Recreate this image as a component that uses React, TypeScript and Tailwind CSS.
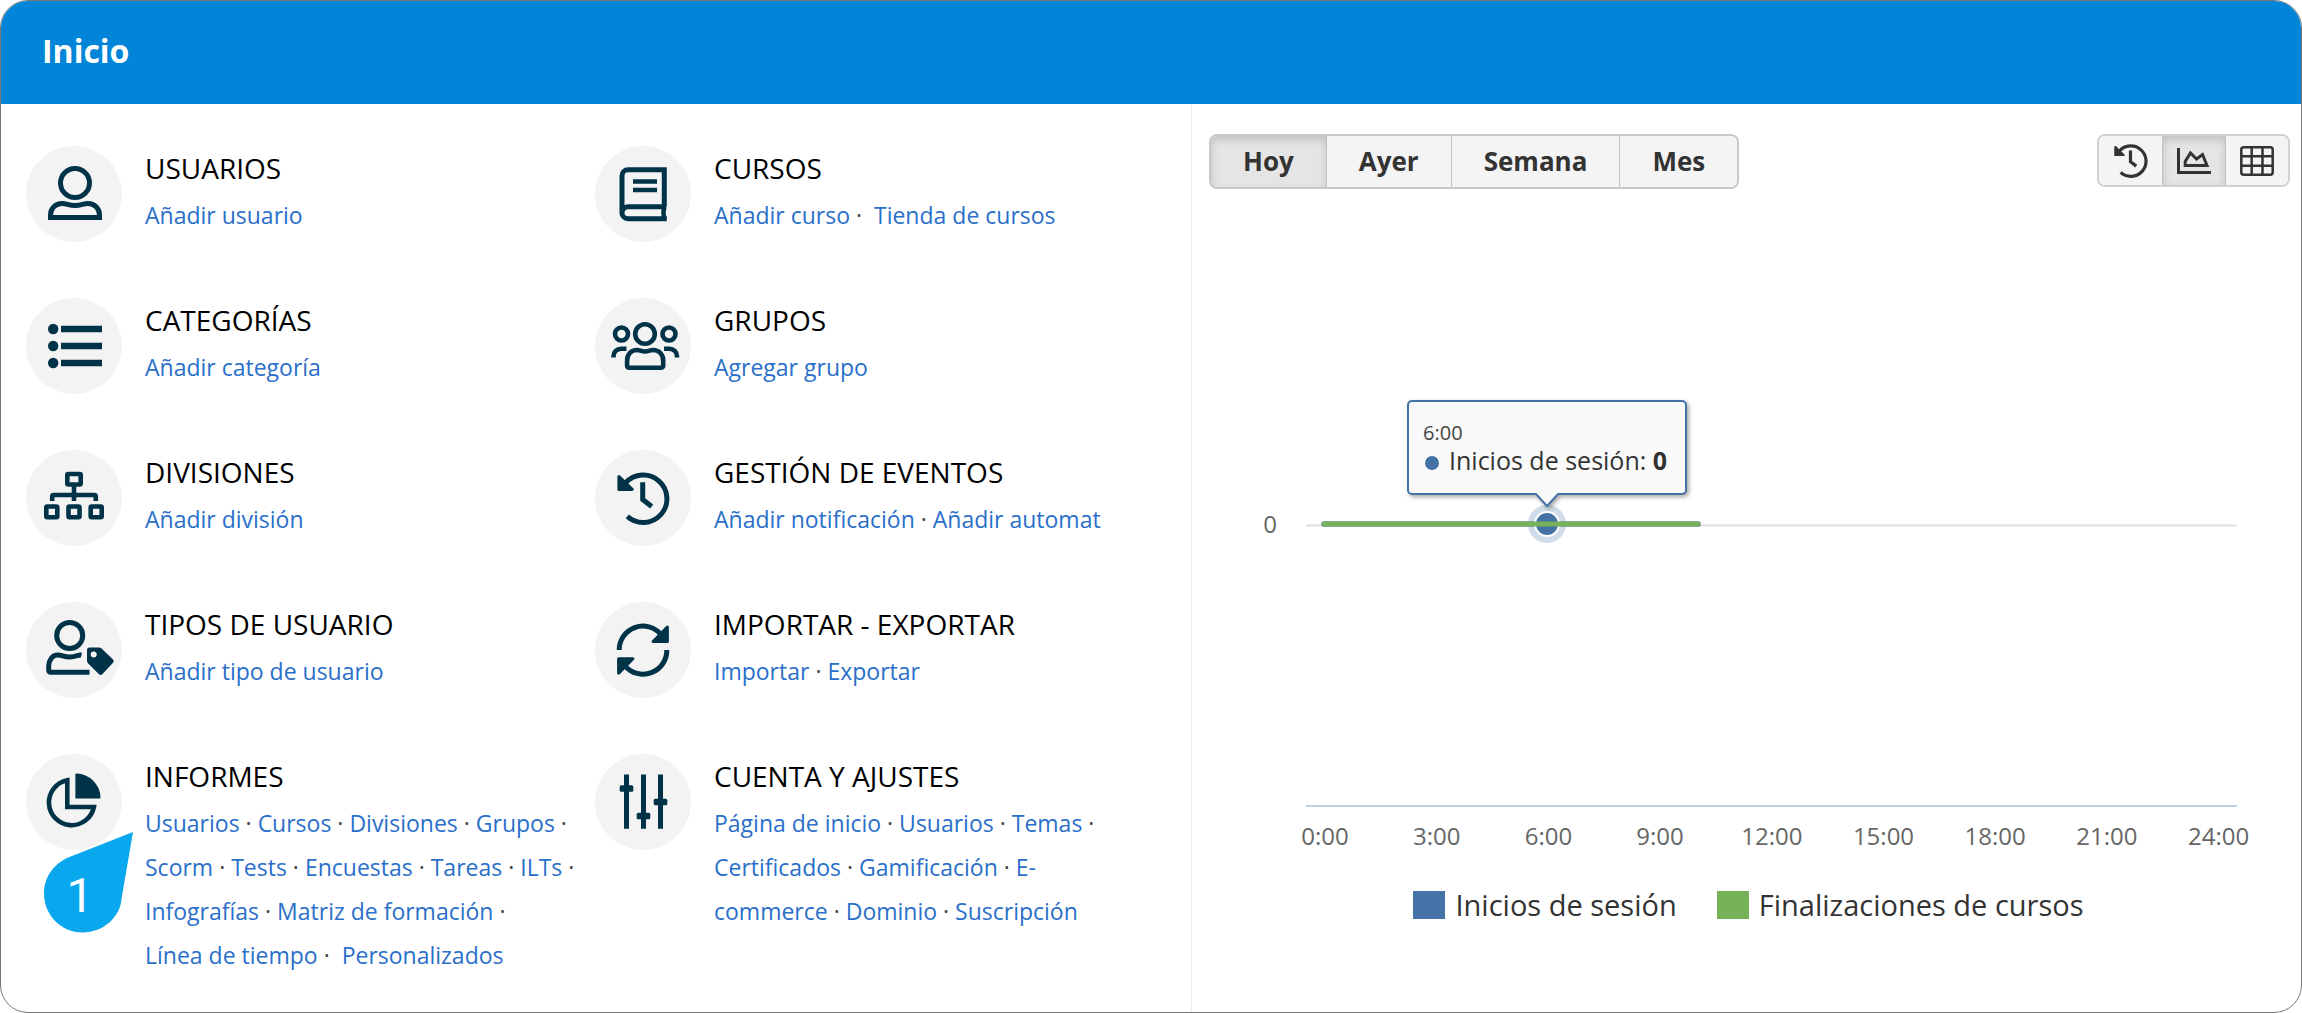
import { useState } from 'react';
import type { ReactNode } from 'react';
import { clsx } from 'clsx';

interface MenuLink {
  label: string;
  wideGap?: boolean;
}

interface MenuItem {
  title: string;
  icon: ReactNode;
  links: MenuLink[];
}

const toLinks = (...labels: string[]): MenuLink[] => labels.map((label) => ({ label }));

/* Icons, drawn on the 96px disc */
const UserIcon = (
  <>
    <circle cx="49" cy="37" r="14.5" />
    <path d="M24.5 71.5V69c0-6.500 5-11.500 11.500-11.500 5 0 6.500 2 13 2s8-2 13-2c6.500 0 11.500 5 11.500 11.500v2.500z" />
  </>
);

const ListIcon = (
  <>
    <path d="M35 31h41M35 48h41M35 65h41" strokeWidth="6.5" />
    <g fill="currentColor" stroke="none">
      <circle cx="27.200" cy="31" r="5.200" />
      <circle cx="27.200" cy="48" r="5.200" />
      <circle cx="27.200" cy="65" r="5.200" />
    </g>
  </>
);

const SitemapIcon = (
  <g strokeWidth="4.6">
    <rect x="41.300" y="24" width="13.400" height="10.500" rx="1" />
    <rect x="20.300" y="56.500" width="11" height="10.700" rx="1" />
    <rect x="42.500" y="56.500" width="11" height="10.700" rx="1" />
    <rect x="64.700" y="56.500" width="11" height="10.700" rx="1" />
    <path d="M48 36v15M26.200 51v-4.500a1.500 1.500 0 0 1 1.500-1.500h40.600a1.500 1.500 0 0 1 1.500 1.500V51" />
  </g>
);

const UserTagIcon = (
  <>
    <circle cx="43.700" cy="33.500" r="13" />
    <path d="M55.500 53.200c-3-.8-5 1.800-11.800 1.800s-7-2-12-2c-5.500 0-9 5.500-9 11v4.500a1.800 1.800 0 0 0 1.800 1.800h39" />
    <path
      d="M63.500 45.500H73a4 4 0 0 1 2.800 1.200l11 10.600a2.600 2.600 0 0 1 0 3.700L76.500 72a2.600 2.600 0 0 1-3.700 0L62.200 61.500a4 4 0 0 1-1.200-2.800V48a2.500 2.500 0 0 1 2.500-2.500zM67.700 49.500a3 3 0 1 0 0 6 3 3 0 0 0 0-6z"
      fill="currentColor"
      stroke="none"
      fillRule="evenodd"
    />
  </>
);

const PieIcon = (
  <>
    <path d="M41.300 26.200V53H67.900A22.700 22.700 0 1 1 41.300 26.200z" strokeWidth="4.6" />
    <path d="M49.400 20.500a1 1 0 0 1 1-1A24.500 24.500 0 0 1 74.500 43.500a1 1 0 0 1-1 1H49.400z" fill="currentColor" stroke="none" />
  </>
);

const BookIcon = (
  <>
    <path d="M69.300 60.800V23.800H33a6 6 0 0 0-6 6V67a6 6 0 0 0 6 5.700H71.800M27 67a6 6 0 0 1 6-6.200H71" />
    <path d="M69.500 61q-2 6 0 11M38 35.500h24M38 44h24" strokeWidth="4.5" />
  </>
);

const UsersIcon = (
  <g strokeWidth="4.6">
    <circle cx="50" cy="36" r="9.800" />
    <circle cx="26.500" cy="36" r="6.500" />
    <circle cx="74" cy="36" r="6.500" />
    <path d="M42 52c3 0 4 1.500 8 1.500s5-1.500 8-1.500c6 0 10.200 4.500 10.200 10.500v5.200a2 2 0 0 1-2 2H34.100a2 2 0 0 1-2-2v-5.200C32.100 56.500 36 52 42 52z" />
    <path d="M18.500 59.500v-1.200a7.500 7.500 0 0 1 7.500-7.500h5.500M82 59.500v-1.200a7.500 7.500 0 0 0-7.500-7.500h-5.500" />
  </g>
);

const HistoryIcon = (
  <>
    <path d="M30.500 33a23.700 23.700 0 1 1 1.800 33.300M47.700 32.300V49.500l9 7" />
    <path d="M22.400 27c0-2 1.600-2.600 2.900-1.300l13 12.600c1 1 .3 2.600-1.200 2.600H23.900a1.500 1.500 0 0 1-1.500-1.500z" fill="currentColor" stroke="none" />
  </>
);

const SyncIcon = (
  <>
    <path d="M24.200 48A23.700 23.700 0 0 1 66 32.500M71.800 48A23.700 23.700 0 0 1 30 63.800" />
    <path
      d="M73.900 25.500c0-2-1.600-2.600-2.900-1.300L57 38.500c-1 1-.3 2.500 1.200 2.500h14.200a1.500 1.500 0 0 0 1.500-1.500zM22.100 70.800c0 2 1.600 2.600 2.900 1.300l14-14.300c1-1 .3-2.500-1.200-2.500H23.600a1.500 1.500 0 0 0-1.500 1.500z"
      fill="currentColor"
      stroke="none"
    />
  </>
);

const SlidersIcon = (
  <>
    <path d="M31.500 20.500v54.300M48.500 20.500v54.300M65.500 20.500v54.300" />
    <g fill="currentColor" stroke="none">
      <rect x="24.700" y="31.200" width="13.600" height="6.600" rx="1.500" />
      <rect x="41.700" y="58.700" width="13.600" height="6.600" rx="1.500" />
      <rect x="58.700" y="44.700" width="13.600" height="6.600" rx="1.500" />
    </g>
  </>
);

const MENU: MenuItem[] = [
  { title: 'USUARIOS', icon: UserIcon, links: toLinks('Añadir usuario') },
  {
    title: 'CURSOS',
    icon: BookIcon,
    links: [{ label: 'Añadir curso' }, { label: 'Tienda de cursos', wideGap: true }],
  },
  { title: 'CATEGORÍAS', icon: ListIcon, links: toLinks('Añadir categoría') },
  { title: 'GRUPOS', icon: UsersIcon, links: toLinks('Agregar grupo') },
  { title: 'DIVISIONES', icon: SitemapIcon, links: toLinks('Añadir división') },
  { title: 'GESTIÓN DE EVENTOS', icon: HistoryIcon, links: toLinks('Añadir notificación', 'Añadir automat') },
  { title: 'TIPOS DE USUARIO', icon: UserTagIcon, links: toLinks('Añadir tipo de usuario') },
  { title: 'IMPORTAR - EXPORTAR', icon: SyncIcon, links: toLinks('Importar', 'Exportar') },
  {
    title: 'INFORMES',
    icon: PieIcon,
    links: [
      ...toLinks(
        'Usuarios',
        'Cursos',
        'Divisiones',
        'Grupos',
        'Scorm',
        'Tests',
        'Encuestas',
        'Tareas',
        'ILTs',
        'Infografías',
        'Matriz de formación',
        'Línea de tiempo'
      ),
      { label: 'Personalizados', wideGap: true },
    ],
  },
  {
    title: 'CUENTA Y AJUSTES',
    icon: SlidersIcon,
    links: toLinks(
      'Página de inicio',
      'Usuarios',
      'Temas',
      'Certificados',
      'Gamificación',
      'E-commerce',
      'Dominio',
      'Suscripción'
    ),
  },
];

const PERIODS = ['Hoy', 'Ayer', 'Semana', 'Mes'];
const HOURS = ['0:00', '3:00', '6:00', '9:00', '12:00', '15:00', '18:00', '21:00', '24:00'];

const VIEWS = [
  {
    id: 'Actividad',
    icon: (
      <svg viewBox="22 22 53 53" className="h-[34px] w-[34px]" fill="none" stroke="currentColor" strokeWidth="5">
        {HistoryIcon}
      </svg>
    ),
  },
  {
    id: 'Gráfico',
    icon: (
      <svg viewBox="0 0 34 26" className="h-[26px] w-[34px]" fill="none" stroke="currentColor" strokeWidth="3">
        <path d="M1.500 0V24.500H34M8.200 17.500v-4L13.500 5l6 6 6-4.500 4.500 11z" />
      </svg>
    ),
  },
  {
    id: 'Tabla',
    icon: (
      <svg viewBox="0 0 34 30" className="h-[30px] w-[34px]" fill="none" stroke="currentColor" strokeWidth="2.5">
        <rect x="1.300" y="1.300" width="31.400" height="27.400" rx="2.500" />
        <path d="M11.700 1v28M22.500 1v28M1 10.300h32M1 19.800h32" />
      </svg>
    ),
  },
];

function MenuEntry({ item }: { item: MenuItem }) {
  return (
    <div className="relative flex gap-[23px] pr-4">
      <div className="h-24 w-24 shrink-0 rounded-full bg-[#f3f3f3] text-[#003348]">
        <svg viewBox="0 0 96 96" className="h-full w-full" fill="none" stroke="currentColor" strokeWidth="5">
          {item.icon}
        </svg>
      </div>
      <div className="min-w-0 flex-1 pt-1">
        <h2 className="text-[28px] leading-9 font-medium text-black">{item.title}</h2>
        <p className="mt-[7px] text-[23px] leading-[44px] text-[#444]">
          {item.links.map((link, i) => (
            <span key={link.label}>
              {i > 0 && (link.wideGap ? '\u00a0· \u00a0' : '\u00a0· ')}
              <a href="#" className="text-[#2a6fca]">
                {link.label.replace(/ /g, '\u00a0')}
              </a>
            </span>
          ))}
        </p>
      </div>
      {item.title === 'INFORMES' && <Callout />}
    </div>
  );
}

function Callout() {
  return (
    <div className="absolute top-[78px] left-[18px] h-[101px] w-[89px]">
      <svg viewBox="0 0 89 101" className="h-full w-full">
        <path d="M89 0 28 24C11 30 0 44 0 61.500 0 83 17 100.500 38.500 100.500S76.500 84 77.500 67z" fill="#08a7ee" />
        <text x="36" y="80" textAnchor="middle" fill="#fff" fontSize="48" fontFamily="Roboto, sans-serif">
          1
        </text>
      </svg>
    </div>
  );
}

const segment = (active: boolean) =>
  clsx(
    'flex items-center justify-center border-l border-[#c4c4c4] first:border-l-0',
    active ? 'bg-[#e5e5e5] shadow-[inset_0_4px_8px_rgba(0,0,0,0.16)]' : 'bg-[#f4f4f4]'
  );

function ActivityChart() {
  return (
    <svg viewBox="0 0 1109 671" className="block w-full" fontSize="24" fill="#666">
      <text x="78" y="344" textAnchor="middle">
        0
      </text>
      <path d="M114 336.500h931" stroke="#e0e0e0" strokeWidth="2" />
      <path d="M114 617h931" stroke="#c0d0e6" strokeWidth="2" />
      {HOURS.map((hour, i) => (
        <text key={hour} x={133 + i * 111.7} y="656" textAnchor="middle">
          {hour}
        </text>
      ))}

      {/* Both series sit at zero, one over the other */}
      <path d="M132 335h374" stroke="#4572a7" strokeOpacity="0.6" strokeWidth="6" strokeLinecap="round" />
      <circle cx="355" cy="335" r="19" fill="#4572a7" fillOpacity="0.25" />
      <circle cx="355" cy="335" r="12" fill="#4572a7" stroke="#fff" strokeWidth="2" />
      <path d="M132 335h374" stroke="#77b259" strokeWidth="5" strokeLinecap="round" />

      {/* Tooltip */}
      <path
        d="M220 212H490a4 4 0 0 1 4 4V301a4 4 0 0 1-4 4H366l-11 12-11-12H220a4 4 0 0 1-4-4V216a4 4 0 0 1 4-4z"
        fill="#fafafa"
        stroke="#4572a7"
        strokeWidth="2"
        className="drop-shadow-[2px_2px_2px_rgba(0,0,0,0.35)]"
      />
      <text x="231" y="251" fontSize="20" fill="#444">
        6:00
      </text>
      <circle cx="240" cy="274" r="7" fill="#4572a7" />
      <text x="257" y="281" fontSize="25" fill="#333">
        Inicios de sesión: <tspan fontWeight="700">0</tspan>
      </text>
    </svg>
  );
}

export default function App() {
  const [period, setPeriod] = useState('Hoy');
  const [view, setView] = useState('Gráfico');

  return (
    <div className="flex min-h-screen flex-col overflow-hidden rounded-[28px] border border-[#777] bg-white font-['Open_Sans',sans-serif]">
      <header className="flex h-[103px] items-center bg-[#0085d9] px-[41px]">
        <h1 className="pb-1 text-[32px] leading-10 font-bold text-white">Inicio</h1>
      </header>

      <main className="grid flex-1 grid-cols-[1190fr_1110fr]">
        <nav className="grid auto-rows-[minmax(152px,auto)] grid-cols-2 content-start pt-[42px] pr-[27px] pb-6 pl-[25px]">
          {MENU.map((item) => (
            <MenuEntry key={item.title} item={item} />
          ))}
        </nav>

        <section className="border-l border-[#eee]">
          <div className="flex items-start justify-between pt-[30px] pr-[11px] pl-[17px]">
            <div className="flex h-[55px] overflow-hidden rounded-lg border-2 border-[#c8c8c8]">
              {PERIODS.map((name) => (
                <button
                  key={name}
                  onClick={() => setPeriod(name)}
                  className={clsx(segment(period === name), 'px-8 text-[26px] font-bold text-[#333]')}
                >
                  {name}
                </button>
              ))}
            </div>
            <div className="flex h-[53px] overflow-hidden rounded-lg border-2 border-[#d0d0d0]">
              {VIEWS.map(({ id, icon }) => (
                <button
                  key={id}
                  aria-label={id}
                  onClick={() => setView(id)}
                  className={clsx(segment(view === id), 'w-[63px] text-[#333]')}
                >
                  {icon}
                </button>
              ))}
            </div>
          </div>

          <ActivityChart />

          <ul className="flex justify-center gap-10 pt-[25px] pl-1 text-[29px] leading-10 text-[#333]">
            <li className="flex items-center gap-[10px]">
              <span className="h-7 w-8 bg-[#4572a7]" />
              Inicios de sesión
            </li>
            <li className="flex items-center gap-[10px]">
              <span className="h-7 w-8 bg-[#77b259]" />
              Finalizaciones de cursos
            </li>
          </ul>
        </section>
      </main>
    </div>
  );
}
